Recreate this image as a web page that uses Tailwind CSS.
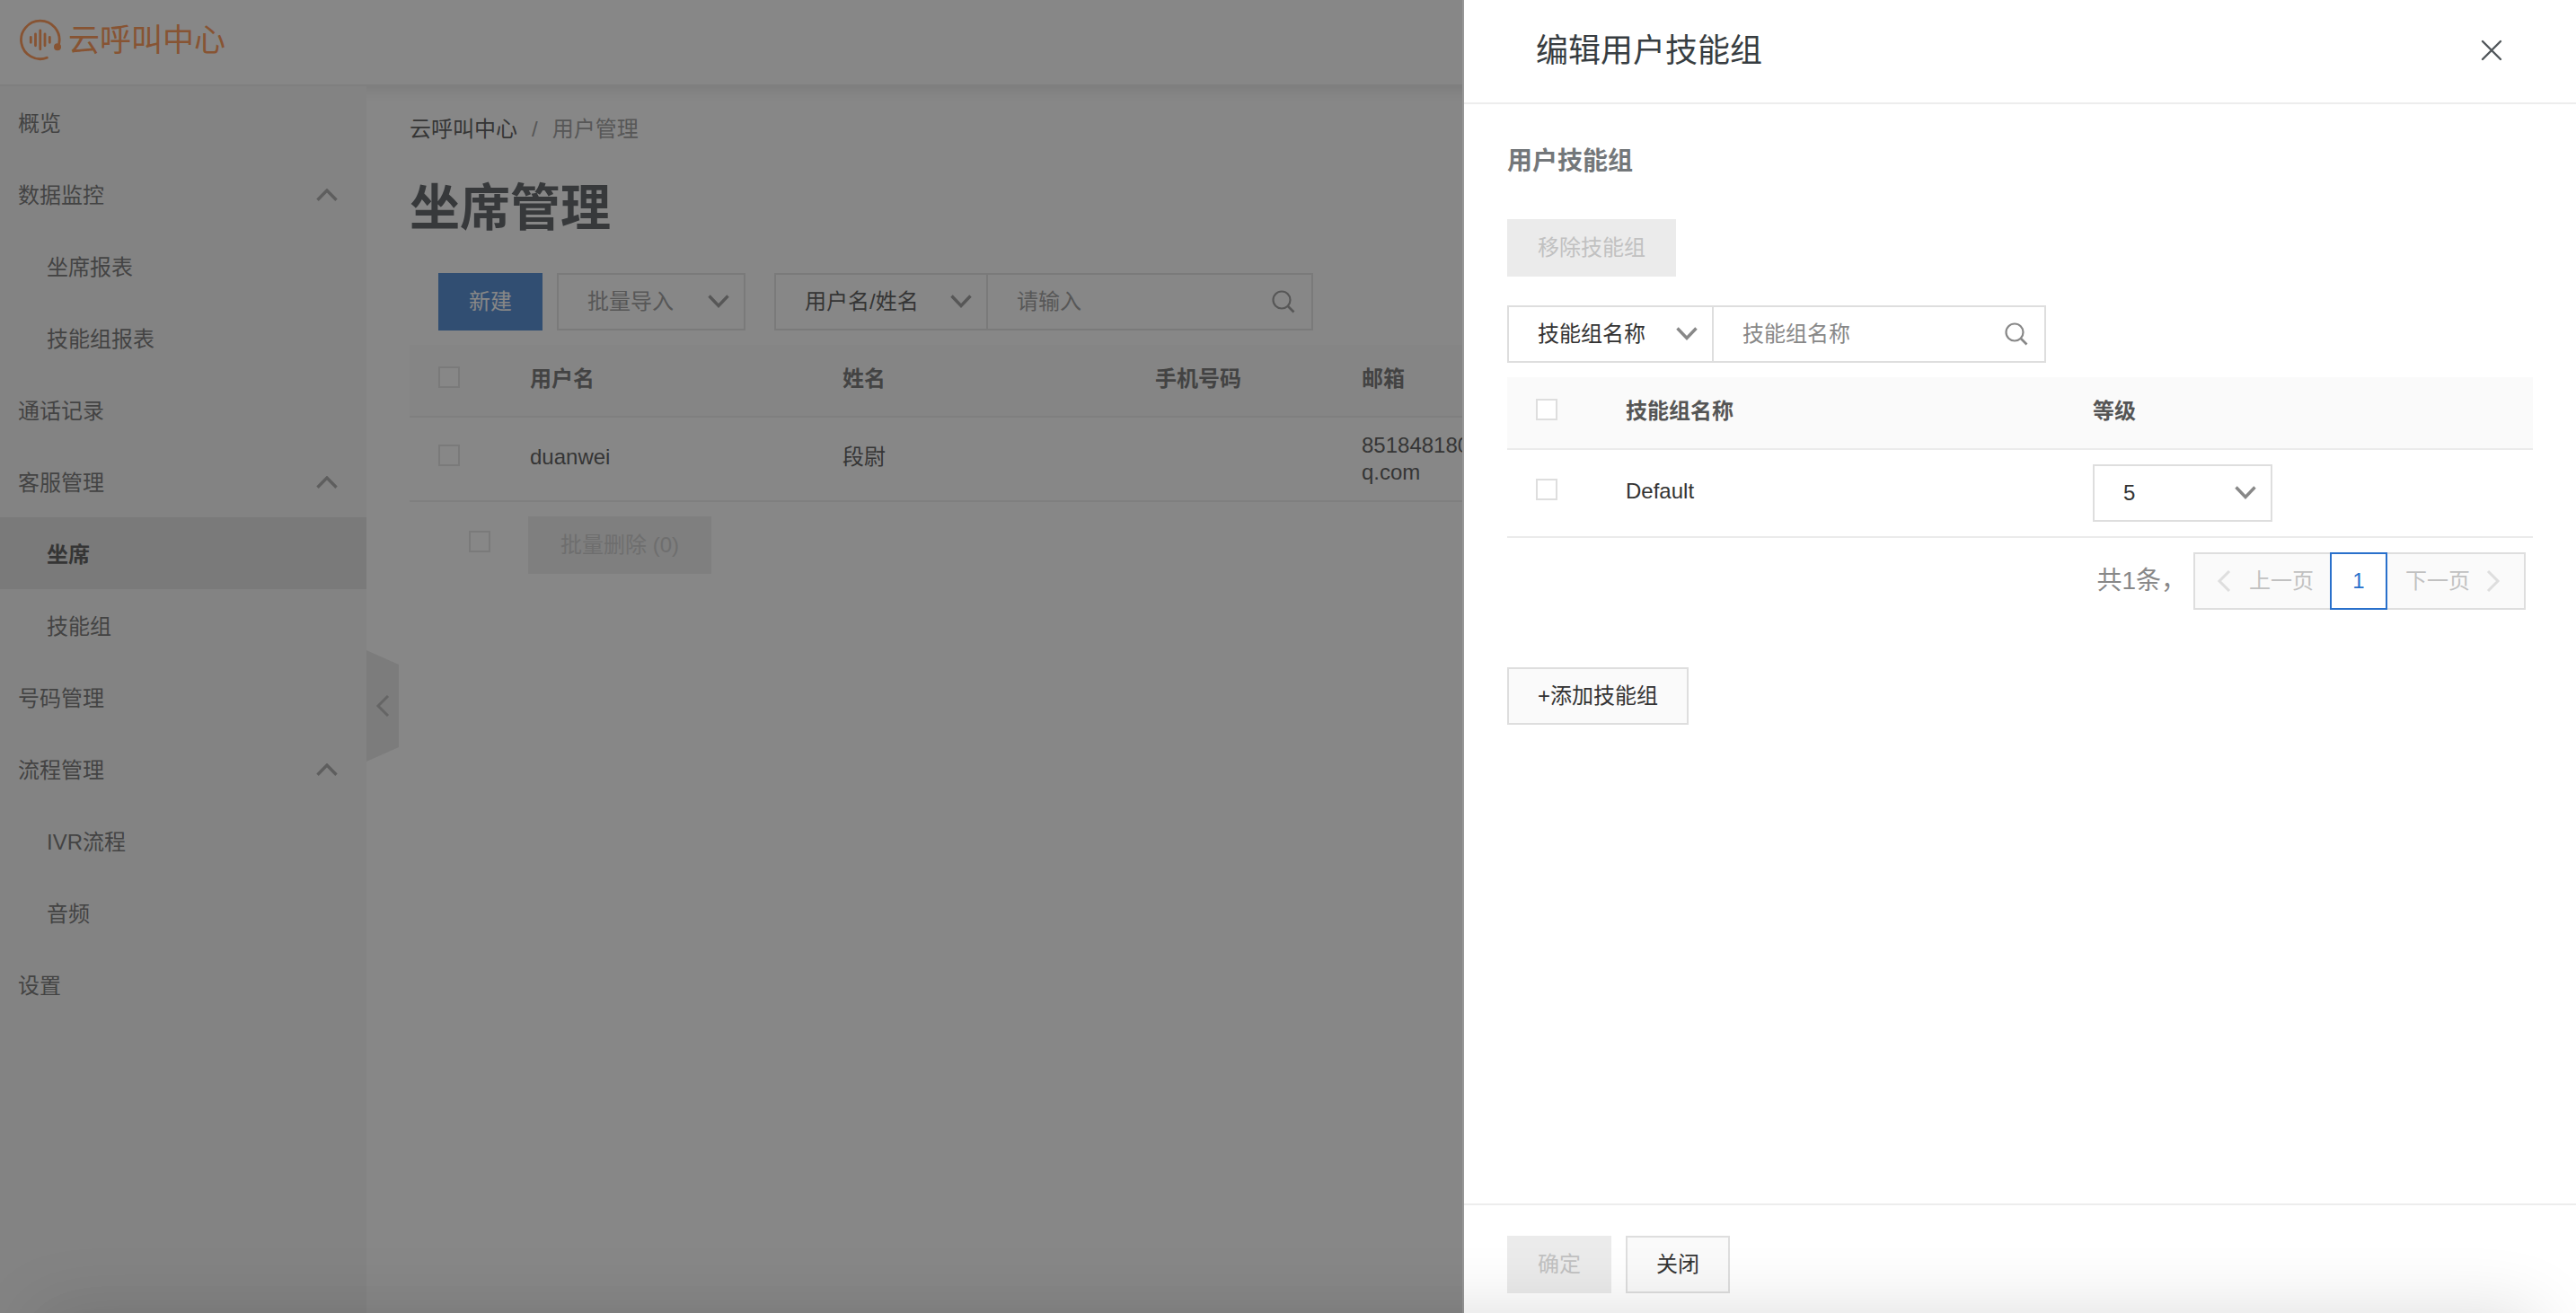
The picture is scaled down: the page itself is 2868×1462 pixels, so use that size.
<!DOCTYPE html>
<html lang="zh-CN">
<head>
<meta charset="utf-8">
<meta name="viewport" content="width=device-width, initial-scale=1">
<title>云呼叫中心 - 坐席管理</title>
<script src="https://cdn.jsdelivr.net/npm/@tailwindcss/browser@4"></script>
</head>
<body class="flex h-screen flex-col overflow-hidden bg-white font-['Liberation_Sans','Noto_Sans_CJK_SC',sans-serif] text-2xl leading-[30px] text-[#333]">

<!-- icon symbols -->
<svg class="hidden" aria-hidden="true">
  <symbol id="chevron-down" viewBox="0 0 24 16"><path d="M1.5 1.5 12 12.5 22.5 1.5" fill="none" stroke="currentColor" stroke-width="3.4"/></symbol>
  <symbol id="chevron-up" viewBox="0 0 24 16"><path d="M1.5 12.8 12 2 22.5 12.8" fill="none" stroke="currentColor" stroke-width="3.4"/></symbol>
  <symbol id="chevron-left" viewBox="0 0 16 24"><path d="M14 1 3 12 14 23" fill="none" stroke="currentColor" stroke-width="3"/></symbol>
  <symbol id="search" viewBox="0 0 26 26"><g fill="none" stroke="currentColor" stroke-width="2.2"><circle cx="11" cy="11" r="9.5"/><path d="m17.5 17.5 7 7" stroke-width="2.6"/></g></symbol>
</svg>

<header class="h-24 shrink-0 border-b-2 border-[#ebebeb] bg-white shadow-[0_4px_16px_rgba(0,0,0,0.12)]">
  <a href="#" class="flex h-full items-center gap-2 pb-1 pl-5 text-[35px] text-[#ff7f2e]">
    <svg class="size-12" viewBox="0 0 48 48" fill="none" stroke="currentColor" stroke-width="2.8" stroke-linecap="round">
      <path d="M45.8 27A21.3 21.3 0 1 0 32.3 43.3"/>
      <circle cx="44" cy="31.3" r="4" fill="currentColor" stroke="none"/>
      <path d="M14.3 20.3v6M19.5 16.8v13M24.8 12.8v21M30 16.8v13M35.3 20.3v6"/>
    </svg>
    <span>云呼叫中心</span>
  </a>
</header>

<div class="flex min-h-0 flex-1">
  <nav class="relative z-10 w-[408px] shrink-0 bg-[#f5f5f5] text-[#555]">
    <ul>
      <li><a href="#" class="flex h-20 items-center pt-1 pl-5">概览</a></li>
      <li><a href="#" class="flex h-20 items-center justify-between pt-1 pl-5 pr-8">数据监控<svg class="h-4 w-6 text-[#999]"><use href="#chevron-up"/></svg></a></li>
      <li><a href="#" class="flex h-20 items-center pt-1 pl-[52px]">坐席报表</a></li>
      <li><a href="#" class="flex h-20 items-center pt-1 pl-[52px]">技能组报表</a></li>
      <li><a href="#" class="flex h-20 items-center pt-1 pl-5">通话记录</a></li>
      <li><a href="#" class="flex h-20 items-center justify-between pt-1 pl-5 pr-8">客服管理<svg class="h-4 w-6 text-[#999]"><use href="#chevron-up"/></svg></a></li>
      <li><a href="#" class="flex h-20 items-center bg-[#dedede] pt-1 pl-[52px] font-bold text-[#333]">坐席</a></li>
      <li><a href="#" class="flex h-20 items-center pt-1 pl-[52px]">技能组</a></li>
      <li><a href="#" class="flex h-20 items-center pt-1 pl-5">号码管理</a></li>
      <li><a href="#" class="flex h-20 items-center justify-between pt-1 pl-5 pr-8">流程管理<svg class="h-4 w-6 text-[#999]"><use href="#chevron-up"/></svg></a></li>
      <li><a href="#" class="flex h-20 items-center pt-1 pl-[52px]">IVR流程</a></li>
      <li><a href="#" class="flex h-20 items-center pt-1 pl-[52px]">音频</a></li>
      <li><a href="#" class="flex h-20 items-center pt-1 pl-5">设置</a></li>
    </ul>
    <button type="button" aria-label="收起菜单" class="absolute top-[628px] left-full flex h-[124px] w-9 items-center justify-center bg-[#e4e4e4] text-[#aaa] [clip-path:polygon(0_0,100%_13%,100%_87%,0_100%)]">
      <svg class="h-6 w-4"><use href="#chevron-left"/></svg>
    </button>
  </nav>

  <main class="min-w-0 flex-1 px-12 pt-8">
    <nav class="flex gap-4 leading-8" aria-label="面包屑">
      <a href="#">云呼叫中心</a><span class="text-[#888]">/</span><span class="text-[#888]">用户管理</span>
    </nav>
    <h1 class="mt-8 text-[56px] leading-[80px] font-bold text-[#373d41]">坐席管理</h1>

    <div class="mt-8 flex h-16 pl-8">
      <button type="button" class="w-[116px] bg-[#2970cb] text-white">新建</button>
      <button type="button" class="ml-4 flex w-[210px] items-center justify-between border-2 border-[#dedede] pr-4 pl-8 text-[#888]">批量导入<svg class="h-4 w-6"><use href="#chevron-down"/></svg></button>
      <div class="ml-8 flex w-[600px] border-2 border-[#dedede]">
        <div class="grid w-[236px] items-center border-r-2 border-[#dedede]">
          <select aria-label="搜索字段" class="col-start-1 row-start-1 h-full w-full appearance-none pl-8 outline-none"><option>用户名/姓名</option></select>
          <svg class="pointer-events-none col-start-1 row-start-1 mr-4 h-4 w-6 justify-self-end text-[#888]"><use href="#chevron-down"/></svg>
        </div>
        <input type="text" aria-label="搜索" placeholder="请输入" class="min-w-0 flex-1 pl-8 outline-none placeholder:text-[#888]">
        <button type="button" aria-label="搜索" class="pr-[18px] pl-2 text-[#888]"><svg class="size-[26px]"><use href="#search"/></svg></button>
      </div>
    </div>

    <table class="mt-4 w-full table-fixed text-left">
      <thead>
        <tr class="h-20 border-b-2 border-[#ebebeb] bg-[#fafafa] text-[#555]">
          <th class="w-[134px] pl-8"><input type="checkbox" aria-label="全选" class="mb-2 block size-6 appearance-none border-2 border-[#dedede] bg-white"></th>
          <th class="w-[348px] pb-1 font-bold">用户名</th>
          <th class="w-[348px] pb-1 font-bold">姓名</th>
          <th class="w-[230px] pb-1 font-bold">手机号码</th>
          <th class="pb-1 font-bold">邮箱</th>
        </tr>
      </thead>
      <tbody>
        <tr class="h-[94px] border-b-2 border-[#ebebeb]">
          <td class="pl-8"><input type="checkbox" aria-label="选择 duanwei" class="mb-2 block size-6 appearance-none border-2 border-[#dedede] bg-white"></td>
          <td class="pb-1">duanwei</td>
          <td class="pb-1">段尉</td>
          <td></td>
          <td>851848180@q<br>q.com</td>
        </tr>
      </tbody>
    </table>

    <div class="mt-4 flex h-16 items-center pl-[66px]">
      <input type="checkbox" aria-label="全选本页" class="mb-2 size-6 appearance-none border-2 border-[#dedede] bg-white">
      <button type="button" disabled class="ml-[42px] h-full w-[204px] bg-[#ebebeb] text-[#c1c1c1]">批量删除 (0)</button>
    </div>
  </main>
</div>

<div class="fixed inset-0 z-20 bg-[#373737]/60"></div>

<aside role="dialog" aria-labelledby="drawer-title" class="fixed inset-y-0 right-0 z-30 flex w-[1240px] flex-col border-l-2 border-[#979797] bg-white">
  <div class="flex h-[116px] shrink-0 items-center justify-between border-b-2 border-[#ededed] pr-20 pl-20">
    <h2 id="drawer-title" class="text-4xl text-[#373d41]">编辑用户技能组</h2>
    <button type="button" aria-label="关闭" class="text-[#50565a]"><svg class="size-7" viewBox="0 0 28 28"><path d="m4 3 20 20M24 3 4 23" fill="none" stroke="currentColor" stroke-width="2.4" stroke-linecap="round"/></svg></button>
  </div>

  <div class="min-h-0 flex-1 px-12 pt-11">
    <h3 class="text-[28px] leading-10 font-bold text-[#73777a]">用户技能组</h3>
    <button type="button" disabled class="mt-11 block h-16 bg-[#ebebeb] px-[34px] text-[#c1c1c1]">移除技能组</button>

    <div class="mt-8 flex h-16 w-[600px] border-2 border-[#dedede]">
      <div class="grid w-[228px] items-center border-r-2 border-[#dedede]">
        <select aria-label="搜索字段" class="col-start-1 row-start-1 h-full w-full appearance-none pl-8 outline-none"><option>技能组名称</option></select>
        <svg class="pointer-events-none col-start-1 row-start-1 mr-4 h-4 w-6 justify-self-end text-[#888]"><use href="#chevron-down"/></svg>
      </div>
      <input type="text" aria-label="技能组名称" placeholder="技能组名称" class="min-w-0 flex-1 pl-8 outline-none placeholder:text-[#888]">
      <button type="button" aria-label="搜索" class="pr-[18px] pl-2 text-[#888]"><svg class="size-[26px]"><use href="#search"/></svg></button>
    </div>

    <table class="mt-4 w-full table-fixed text-left">
      <thead>
        <tr class="h-20 border-b-2 border-[#ebebeb] bg-[#fafafa] text-[#555]">
          <th class="w-[132px] pl-8"><input type="checkbox" aria-label="全选" class="mb-2 block size-6 appearance-none border-2 border-[#dedede] bg-white"></th>
          <th class="w-[520px] pb-1 font-bold">技能组名称</th>
          <th class="pb-1 font-bold">等级</th>
        </tr>
      </thead>
      <tbody>
        <tr class="h-[98px] border-b-2 border-[#ebebeb]">
          <td class="pl-8"><input type="checkbox" aria-label="选择 Default" class="mb-2 block size-6 appearance-none border-2 border-[#dedede] bg-white"></td>
          <td class="pb-1">Default</td>
          <td>
            <div class="grid h-16 w-[200px] items-center border-2 border-[#dedede]">
              <select aria-label="等级" class="col-start-1 row-start-1 h-full w-full appearance-none pl-8 outline-none"><option>5</option></select>
              <svg class="pointer-events-none col-start-1 row-start-1 mr-4 h-4 w-6 justify-self-end text-[#888]"><use href="#chevron-down"/></svg>
            </div>
          </td>
        </tr>
      </tbody>
    </table>

    <div class="mt-4 flex h-16 items-center justify-end pr-2">
      <span class="mr-2 text-[28px] text-[#888]">共1条，</span>
      <button type="button" disabled class="flex h-full w-[152px] items-center gap-5 border-2 border-r-0 border-[#dedede] bg-[#fafafa] pl-6 text-[#c1c1c1]"><svg class="h-6 w-4 text-[#dedede]"><use href="#chevron-left"/></svg>上一页</button>
      <button type="button" aria-current="page" class="h-full w-16 border-2 border-[#2970cb] text-[#2970cb]">1</button>
      <button type="button" disabled class="flex h-full w-[154px] items-center justify-between border-2 border-l-0 border-[#dedede] bg-[#fafafa] pr-[26px] pl-5 text-[#c1c1c1]">下一页<svg class="h-6 w-4 rotate-180 text-[#dedede]"><use href="#chevron-left"/></svg></button>
    </div>

    <button type="button" class="mt-16 block h-16 border-2 border-[#dedede] bg-[#fafafa] px-8">+添加技能组</button>
  </div>

  <div class="flex h-[122px] shrink-0 items-start gap-4 border-t-2 border-[#ededed] px-12 pt-[34px]">
    <button type="button" disabled class="h-16 w-[116px] bg-[#ebebeb] text-[#c1c1c1]">确定</button>
    <button type="button" class="h-16 w-[116px] border-2 border-[#dedede] bg-[#fafafa]">关闭</button>
  </div>
</aside>

<!-- shade along the bottom edge -->
<div class="pointer-events-none fixed inset-x-11 top-full z-40 h-40 shadow-[0_0_80px_rgba(0,0,0,0.14)]"></div>
</body>
</html>
